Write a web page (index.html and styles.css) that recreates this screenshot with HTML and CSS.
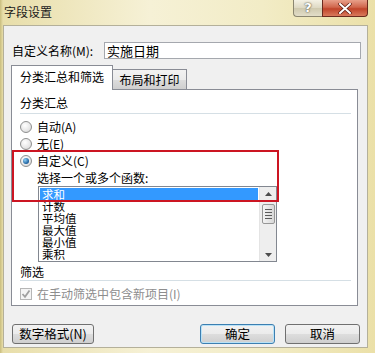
FILE: index.html
```html
<!DOCTYPE html>
<html lang="zh-CN">
  <head>
    <meta charset="utf-8" />
    <title>字段设置</title>
    <link rel="stylesheet" href="styles.css">
  </head>
  <body>
    <div class="window">
      <div class="titlebar">
        <span class="title">字段设置</span>
        <div class="caption-btns">
          <div class="cap-help">?</div>
          <div class="cap-close">
            <svg width="14" height="11" viewBox="0 0 14 11">
              <path d="M2 1 L12 10 M12 1 L2 10" stroke="#5a1a10" stroke-width="3.4" stroke-linecap="round" />
              <path d="M2 1 L12 10 M12 1 L2 10" stroke="#ffffff" stroke-width="2" stroke-linecap="round" />
            </svg>
          </div>
        </div>
      </div>

      <div class="dialog">
        <div class="name-row">
          <label class="name-label">自定义名称(M):</label>
          <div class="name-input">实施日期</div>
        </div>

        <div class="tabs">
          <div class="tab active">分类汇总和筛选</div>
          <div class="tab">布局和打印</div>
        </div>

        <div class="panel">
          <div class="group-title">分类汇总</div>

          <div class="radio-row first">
            <span class="radio"></span>
            <span>自动(A)</span>
          </div>
          <div class="radio-row">
            <span class="radio"></span>
            <span>无(E)</span>
          </div>
          <div class="radio-row">
            <span class="radio checked"></span>
            <span>自定义(C)</span>
          </div>

          <div class="func-label">选择一个或多个函数:</div>

          <div class="listbox">
            <div class="list-items">
              <div class="item selected">求和</div>
              <div class="item">计数</div>
              <div class="item">平均值</div>
              <div class="item">最大值</div>
              <div class="item">最小值</div>
              <div class="item">乘积</div>
            </div>
            <div class="scrollbar">
              <div class="sb-arrow">
                <svg width="7" height="4" viewBox="0 0 7 4"><path d="M0 4 L3.5 0 L7 4 Z" fill="#4d4d4d" /></svg>
              </div>
              <div class="sb-thumb">
                <span></span><span></span><span></span><span></span>
              </div>
              <div class="sb-track"></div>
              <div class="sb-arrow">
                <svg width="7" height="4" viewBox="0 0 7 4"><path d="M0 0 L7 0 L3.5 4 Z" fill="#4d4d4d" /></svg>
              </div>
            </div>
          </div>

          <div class="group-title filter">筛选</div>

          <div class="check-row">
            <span class="checkbox">
              <svg width="10" height="10" viewBox="0 0 10 10"><path d="M1.5 5 L4 7.8 L8.5 1.5" fill="none" stroke="#a0a0a0" stroke-width="1.8" /></svg>
            </span>
            <span>在手动筛选中包含新项目(I)</span>
          </div>

          <!-- highlight drawn over the screenshot -->
          <div class="highlight"></div>
        </div>

        <div class="buttons">
          <div class="btn wide">数字格式(N)</div>
          <div class="spacer"></div>
          <div class="btn default">确定</div>
          <div class="btn">取消</div>
        </div>
      </div>
    </div>
  </body>
</html>
```

FILE: styles.css
```css
* {
  margin: 0;
  padding: 0;
  box-sizing: border-box;
}
body {
  font-family: "Noto Sans CJK SC", "Noto Sans", sans-serif;
  font-size: 12px;
  color: #000000;
  background-color: #efe6b4;
}
.window {
  width: 375px;
  height: 353px;
  padding: 0 7px 0 3px;
  background: linear-gradient(90deg, #c9bd7e 0, #e8deaa 3px, #f6f1d6 40%, #f2ecc6 70%, #ebe0a8 100%);
  overflow: hidden;
}
.titlebar {
  height: 25px;
  display: flex;
  justify-content: space-between;
}
.title {
  margin: 5px 0 0 1px;
  line-height: 14px;
  color: #1a1a1a;
}
.caption-btns {
  display: flex;
  height: 17px;
}
.cap-help {
  width: 29px;
  height: 17px;
  border: 1px solid #8b8670;
  border-top: none;
  border-right: none;
  border-radius: 0 0 0 4px;
  background: linear-gradient(#f4f1e4, #ddd8c2 50%, #cfc9ae 51%, #e2ddc8);
  color: #ffffff;
  font-family: "DejaVu Sans", sans-serif;
  font-weight: bold;
  font-size: 13px;
  line-height: 15px;
  text-align: center;
  text-shadow: 0 0 2px #5a5540, 0 0 1px #5a5540;
}
.cap-close {
  width: 46px;
  height: 17px;
  border: 1px solid #6b2a1e;
  border-top: none;
  border-radius: 0 0 4px 0;
  background: linear-gradient(#e8a08a, #d0664c 45%, #c0442a 55%, #d97a5c);
  display: flex;
  align-items: center;
  justify-content: center;
}
.dialog {
  height: 323px;
  border: 1px solid #b4b09a;
  background-color: #f0f0f0;
  padding: 16px 6px 0 8px;
}
.name-row {
  display: flex;
  height: 17px;
  align-items: center;
}
.name-label {
  flex: 0 0 92px;
  line-height: 14px;
}
.name-input {
  flex: 1;
  height: 17px;
  border: 1px solid #a5a8ae;
  background-color: #ffffff;
  padding-left: 2px;
  line-height: 15px;
  font-size: 13px;
}
.tabs {
  display: flex;
  margin: 6px 0 0 -1px;
  height: 24px;
  align-items: flex-end;
  position: relative;
  z-index: 1;
}
.tab {
  width: 74px;
  height: 20px;
  border: 1px solid #898c95;
  border-bottom: none;
  border-left: none;
  background: linear-gradient(#f2f2f2, #ebebeb 50%, #dddddd 51%, #cfcfcf);
  line-height: 19px;
  font-size: 12px;
  text-align: center;
}
.tab.active {
  width: 102px;
  height: 25px;
  margin-bottom: -1px;
  border-left: 1px solid #898c95;
  background: #ffffff;
  line-height: 22px;
}
.panel {
  position: relative;
  height: 217px;
  margin: 0 3px 0 -1px;
  border: 1px solid #898c95;
  background-color: #ffffff;
  padding: 0 6px 0 8px;
}
.group-title {
  padding: 6px 0 3px;
  line-height: 14px;
  border-bottom: 1px solid #d5dfe5;
}
.group-title.filter {
  margin-top: 3px;
  padding: 0 0 1px;
}
.radio-row {
  display: flex;
  align-items: center;
  height: 17px;
  line-height: 14px;
}
.radio-row.first {
  margin-top: 4px;
}
.radio {
  width: 12px;
  height: 12px;
  margin-right: 5px;
  border: 1px solid #8e8f8f;
  border-radius: 50%;
  background: radial-gradient(circle at 40% 35%, #ffffff, #e6e6e6 60%, #c9c9c9);
  display: flex;
  align-items: center;
  justify-content: center;
}
.radio.checked::after {
  content: "";
  width: 6px;
  height: 6px;
  border-radius: 50%;
  background: radial-gradient(circle at 35% 35%, #8fd0f5, #1a5d9c 70%, #0f3d6e);
}
.func-label {
  margin: 2px 0 0 17px;
  line-height: 14px;
}
.listbox {
  display: flex;
  width: 239px;
  height: 76px;
  margin: 1px 0 0 18px;
  border: 1px solid #828790;
  background-color: #ffffff;
}
.list-items {
  flex: 1;
  padding: 1px;
  overflow: hidden;
}
.item {
  height: 12px;
  line-height: 12px;
  padding-left: 2px;
  font-size: 11.5px;
  white-space: nowrap;
}
.item.selected {
  background-color: #3399ff;
  color: #ffffff;
}
.scrollbar {
  width: 17px;
  display: flex;
  flex-direction: column;
  background-color: #eeeeee;
  border-left: 1px solid #e4e4e4;
}
.sb-arrow {
  height: 13px;
  display: flex;
  align-items: center;
  justify-content: center;
}
.sb-thumb {
  height: 20px;
  margin: 4px 1px 0 2px;
  border: 1px solid #979797;
  border-radius: 2px;
  background: linear-gradient(90deg, #f3f3f3, #e6e6e6 50%, #d8d8d8);
  display: flex;
  flex-direction: column;
  justify-content: center;
  align-items: center;
  gap: 2px;
}
.sb-thumb span {
  width: 7px;
  height: 1px;
  background-color: #5c5c5c;
}
.sb-track {
  flex: 1;
}
.check-row {
  display: flex;
  align-items: center;
  height: 17px;
  margin-top: 4px;
  color: #8d8d8d;
  line-height: 14px;
}
.checkbox {
  width: 12px;
  height: 12px;
  margin-right: 5px;
  border: 1px solid #b6b6b6;
  background-color: #f4f4f4;
  display: flex;
  align-items: center;
  justify-content: center;
}
.highlight {
  position: absolute;
  left: 0;
  top: 60px;
  width: 267px;
  height: 52px;
  border: 2px solid #cc1522;
  pointer-events: none;
}
.buttons {
  display: flex;
  gap: 10px;
  margin: 18px 1px 0 0;
}
.spacer {
  flex: 1;
}
.btn {
  width: 75px;
  height: 20px;
  border: 1px solid #707070;
  border-radius: 3px;
  background: linear-gradient(#f2f2f2, #ebebeb 50%, #dddddd 51%, #cfcfcf);
  text-align: center;
  line-height: 18px;
  font-size: 12.5px;
}
.btn.wide {
  width: 82px;
}
.btn.default {
  border-color: #3c7fb1;
  box-shadow: inset 0 0 0 1px #b9e2f7;
}
```
